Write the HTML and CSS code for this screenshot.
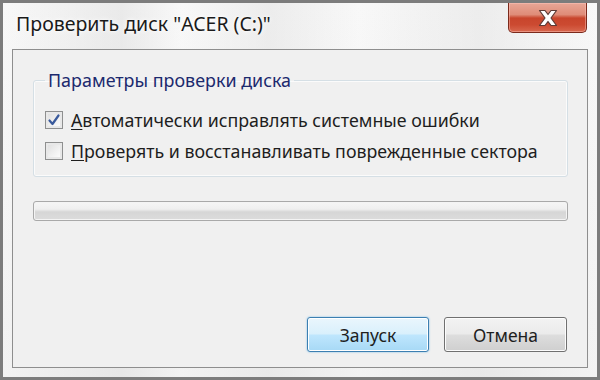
FILE: index.html
```html
<!DOCTYPE html>
<html lang="ru">
<head>
<meta charset="utf-8">
<title>Проверить диск</title>
<link rel="stylesheet" href="styles.css">
</head>
<body>
<div class="window">
  <div class="titlebar">
    <div class="title">Проверить диск "ACER (C:)"</div>
    <div class="close" aria-label="Закрыть">
      <svg width="22" height="18" viewBox="0 0 22 18">
        <path d="M2.5 1.5 L8 1.5 L11 5.5 L14 1.5 L19.5 1.5 L14 9 L19.5 16.5 L14 16.5 L11 12.5 L8 16.5 L2.5 16.5 L8 9 Z" fill="#ffffff" stroke="#5e3a35" stroke-width="1.2" stroke-linejoin="round"/>
      </svg>
    </div>
  </div>
  <div class="client">
    <fieldset class="group">
      <legend class="group-title">Параметры проверки диска</legend>
      <label class="check-row">
        <span class="box checked">
          <svg width="14" height="14" viewBox="0 0 14 14"><path d="M2.5 7.5 L5.5 11 L11.5 2.5" fill="none" stroke="#3a5a9c" stroke-width="2.2" stroke-linecap="round" stroke-linejoin="round"/></svg>
        </span>
        <span class="label"><u>А</u>втоматически исправлять системные ошибки</span>
      </label>
      <label class="check-row">
        <span class="box"></span>
        <span class="label"><u>П</u>роверять и восстанавливать поврежденные сектора</span>
      </label>
    </fieldset>
    <div class="progress"></div>
    <div class="buttons">
      <button class="btn default">Запуск</button>
      <button class="btn">Отмена</button>
    </div>
  </div>
</div>
</body>
</html>
```
FILE: styles.css
```css
html, body {
  margin: 0;
  padding: 0;
}
body {
  width: 600px;
  height: 380px;
  overflow: hidden;
  background: #7a7a7a;
  font-family: "Noto Sans", "Open Sans", sans-serif;
  color: #1e1e1e;
}
.window {
  box-sizing: border-box;
  width: 600px;
  height: 380px;
  border: 3px solid #7c7c7c;
  padding: 0 9px 9px 9px;
  display: flex;
  flex-direction: column;
  background:
    linear-gradient(90deg, rgba(255,255,255,0) 0%, rgba(220,220,220,0.5) 20%, rgba(255,255,255,0) 30%, rgba(225,225,225,0.5) 45%, rgba(255,255,255,0) 60%, rgba(220,220,220,0.4) 80%, rgba(255,255,255,0) 100%),
    linear-gradient(180deg, #f8f8f8 0%, #f2f2f2 100%);
}
.titlebar {
  height: 46px;
  display: flex;
  justify-content: space-between;
  align-items: flex-start;
  flex: none;
}
.title {
  padding: 8px 0 0 4px;
  font-size: 19.5px;
  line-height: 26px;
  color: #1a1a1a;
  text-shadow: 0 0 6px #ffffff, 0 0 3px #ffffff;
}
.close {
  width: 79px;
  height: 30px;
  margin-right: 1px;
  box-sizing: border-box;
  border: 1px solid #7b2a1c;
  border-top: none;
  border-radius: 0 0 5px 5px;
  background: linear-gradient(180deg, #e9a797 0%, #df8c78 40%, #c8452c 52%, #cc4a31 75%, #d8684f 100%);
  box-shadow: inset 0 0 0 1px rgba(255,200,190,0.45);
  display: flex;
  align-items: center;
  justify-content: center;
}
.client {
  flex: 1;
  border: 1px solid #8e8e8e;
  background: #f0f0f0;
  padding: 0 19px 15px 20px;
  display: flex;
  flex-direction: column;
}
.group {
  margin: 20px 0 0 0;
  padding: 14px 11px 10px 11px;
  border: 1px solid #d5dfe5;
  border-radius: 3px;
  box-shadow: inset 0 0 0 1px #fbfbfb;
  min-width: 0;
}
.group-title {
  margin-left: 0;
  padding: 0 3px;
  font-size: 17.9px;
  line-height: 20px;
  color: #1c2a6e;
}
.check-row {
  display: flex;
  align-items: center;
  height: 31px;
  font-size: 17.8px;
  color: #1e1e1e;
}
.box {
  box-sizing: border-box;
  width: 18px;
  height: 18px;
  border: 1px solid #8e8f8f;
  background: linear-gradient(135deg, #dcdcdc 0%, #f2f2f2 60%, #ffffff 100%);
  box-shadow: inset 0 0 0 2px #e8e8e8;
  margin-right: 8px;
  display: flex;
  align-items: center;
  justify-content: center;
  flex: none;
}
.label u {
  text-decoration: underline;
  text-underline-offset: 2px;
}
.progress {
  margin: 24px 0 0 0;
  height: 20px;
  box-sizing: border-box;
  border: 1px solid #a9a9a9;
  border-radius: 3px;
  background: linear-gradient(180deg, #f6f6f6 0%, #efefef 40%, #d6d6d6 55%, #dcdcdc 100%);
  box-shadow: inset 0 0 0 1px #f4f4f4;
}
.buttons {
  margin-top: auto;
  display: flex;
  justify-content: flex-end;
  gap: 15px;
  padding-right: 1px;
}
.btn {
  box-sizing: border-box;
  width: 123px;
  height: 35px;
  border: 1px solid #707070;
  border-radius: 3px;
  font-family: "Noto Sans", "Open Sans", sans-serif;
  font-size: 17.5px;
  color: #1e1e1e;
  padding: 0;
  background: linear-gradient(180deg, #f3f3f3 0%, #ebebeb 48%, #dddddd 52%, #cfcfcf 100%);
  box-shadow: inset 0 0 0 1px #fcfcfc;
}
.btn.default {
  width: 122px;
  border-color: #3c7fb1;
  background: linear-gradient(180deg, #eaf6fd 0%, #d9f0fc 48%, #bee6fd 52%, #a7d9f5 100%);
  box-shadow: inset 0 0 0 1px #ffffff, 0 0 2px #6fb7e8;
}
```
